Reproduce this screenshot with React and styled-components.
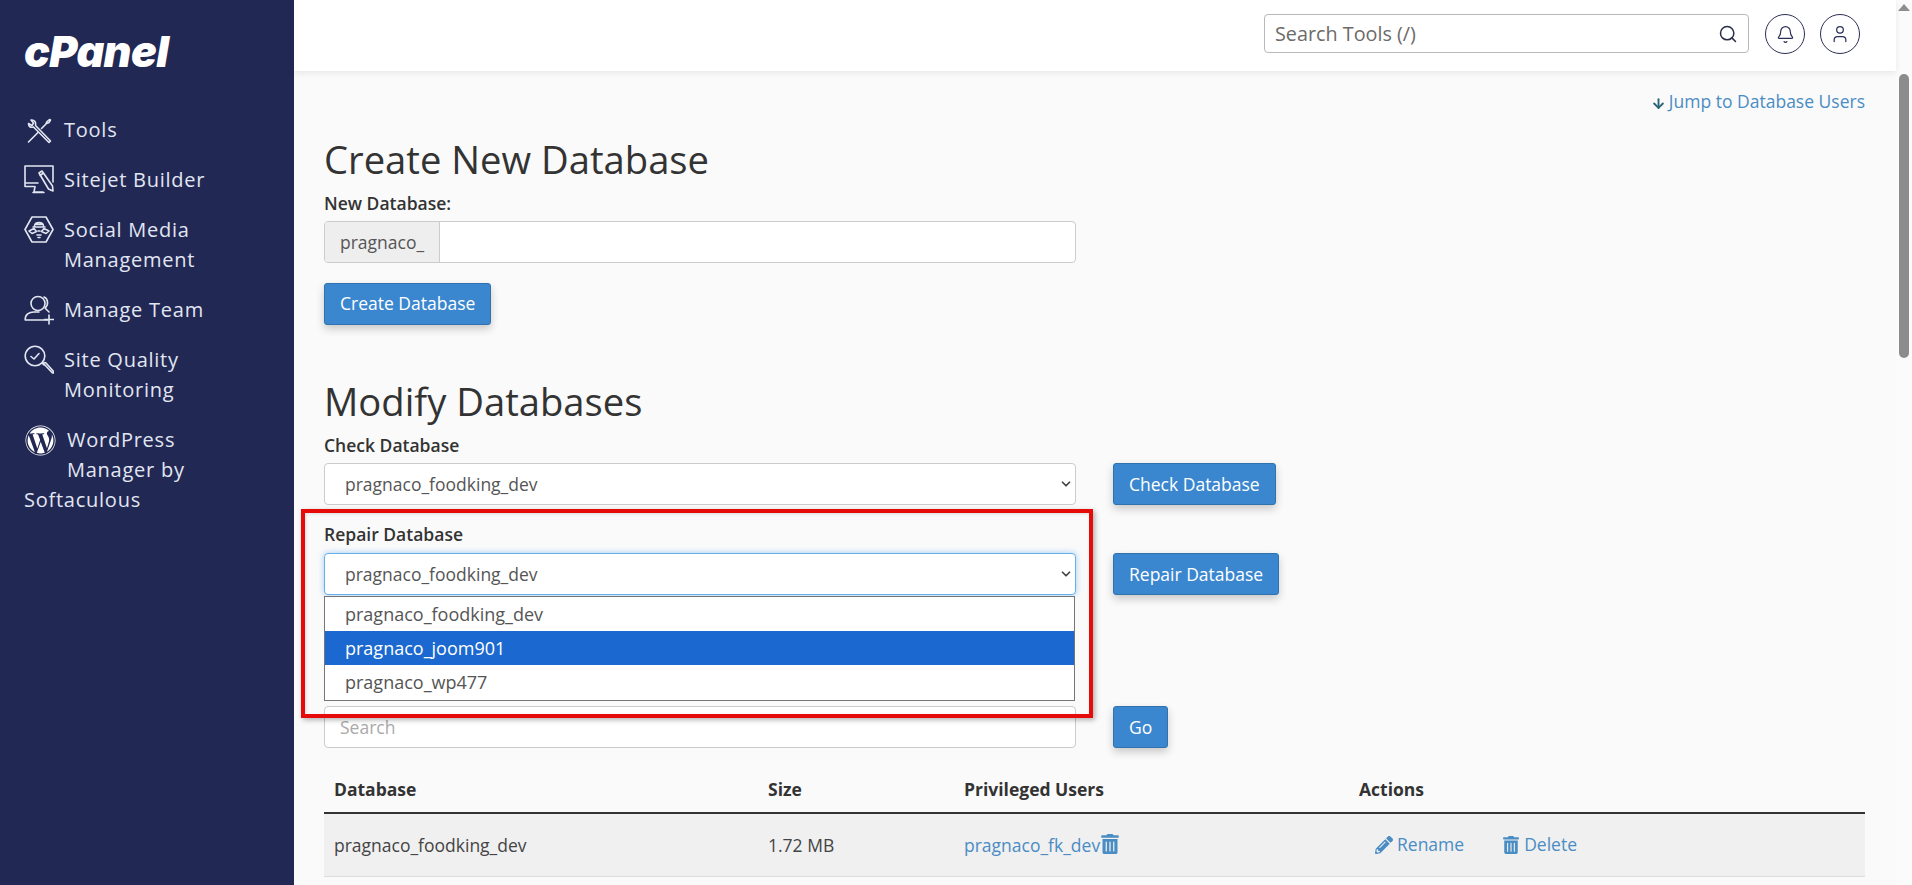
import React from "react";
import styled, { createGlobalStyle } from "styled-components";
import { Search, Bell, User, ArrowDown, ChevronDown } from "lucide-react";
import { FaTrashAlt, FaPencilAlt, FaWordpress } from "react-icons/fa";

const Global = createGlobalStyle`
  html, body { margin: 0; height: 100%; overflow: hidden; }
  body { font-family: "Open Sans", "Liberation Sans", sans-serif; color: #333; background: #fafafa; }
  #root { height: 100%; }
  * { box-sizing: border-box; }
`;

const Page = styled.div`
  display: grid;
  grid-template-columns: 294px 1fr 16px;
  height: 885px;
  overflow: hidden;
`;

const Sidebar = styled.aside`
  background: #212853;
  color: #e2e6f2;
  padding: 36px 40px 0 24px;
`;

const Logo = styled.div`
  font-family: "Inter", "Liberation Sans", sans-serif;
  font-size: 43px;
  line-height: 31px;
  height: 31px;
  font-weight: 900;
  font-style: italic;
  letter-spacing: -0.6px;
  color: #fff;
  margin-bottom: 48px;
  white-space: nowrap;
`;

const Nav = styled.nav`
  display: flex;
  flex-direction: column;
  gap: 20px;
`;

const NavItem = styled.a`
  display: block;
  font-size: 20px;
  line-height: 30px;
  letter-spacing: 0.75px;
  color: inherit;
  min-height: 30px;
  &::after { content: ""; display: block; clear: both; }
`;

const NavIcon = styled.svg`
  float: left;
  width: 30px;
  height: 30px;
  margin-right: 10px;
  margin-bottom: ${(p) => (p.$tall ? "1px" : "0")};
  fill: none;
  stroke: #e2e6f2;
  stroke-width: 1.6;
  stroke-linecap: round;
  stroke-linejoin: round;
`;

const WpIcon = styled(FaWordpress)`
  float: left;
  display: block;
  width: 31px;
  height: 58px;
  margin: 0 11px 0 1px;
  padding-bottom: 27px;
  color: #fff;
`;

const Main = styled.main`
  display: flex;
  flex-direction: column;
  min-width: 0;
`;

const Header = styled.header`
  height: 71px;
  background: #fff;
  box-shadow: 0 2px 6px rgba(0, 0, 0, 0.08);
  display: flex;
  align-items: flex-start;
  justify-content: flex-end;
  gap: 15px;
  padding: 14px 36px 0 0;
  position: relative;
  z-index: 1;
`;

const SearchBox = styled.div`
  width: 485px;
  height: 39px;
  border: 1px solid #b9b9bd;
  border-radius: 4px;
  display: flex;
  align-items: center;
  justify-content: space-between;
  padding: 0 10px;
  margin-right: 1px;
  font-size: 19.8px;
  color: #6d6a68;
  background: #fff;
`;

const RoundButton = styled.button`
  width: 40px;
  height: 40px;
  border-radius: 50%;
  border: 1px solid #2b2f55;
  background: #fff;
  color: #2b2f55;
  display: flex;
  align-items: center;
  justify-content: center;
  padding: 0;
`;

const Content = styled.div`
  position: relative;
  padding: 18px 31px 0 30px;
  font-size: 17.5px;
  line-height: 25px;
`;

const JumpRow = styled.div`
  text-align: right;
  height: 25px;
`;

const Link = styled.a`
  color: #4a8cc4;
  white-space: nowrap;
`;

const JumpArrow = styled(ArrowDown)`
  color: #2a6577;
  vertical-align: -3px;
  margin-right: 3px;
`;

const Title = styled.h2`
  font-size: 38.2px;
  line-height: 41px;
  font-weight: 400;
  color: #333;
  margin: ${(p) => (p.$first ? "25px" : "56px")} 0 11px;
`;

const Label = styled.label`
  display: block;
  font-weight: 600;
  margin-bottom: ${(p) => p.$gap || "5px"};
  color: #333;
`;

const PrefixGroup = styled.div`
  width: 752px;
  height: 42px;
  display: flex;
  border: 1px solid #ccc;
  border-radius: 4px;
  background: #fff;
  overflow: hidden;
`;

const Prefix = styled.span`
  width: 115px;
  background: #eee;
  border-right: 1px solid #ccc;
  color: #555;
  display: flex;
  align-items: center;
  padding-left: 15px;
`;

const Button = styled.button`
  height: 42px;
  padding: 0 15px;
  font: inherit;
  color: #fff;
  background: #3a87cf;
  border: 1px solid #2f72ad;
  border-radius: 3px;
  box-shadow: 0 4px 8px rgba(0, 0, 0, 0.2);
  white-space: nowrap;
`;

const CreateButton = styled(Button)`
  display: block;
  margin-top: 20px;
  padding-bottom: 2px;
`;

const FormRow = styled.div`
  display: grid;
  grid-template-columns: 752px auto;
  justify-content: start;
  column-gap: 37px;
  margin-bottom: ${(p) => p.$gap || "17px"};
`;

const SelectWrap = styled.div`
  position: relative;
  height: 42px;
  width: 752px;
`;

const Select = styled.select`
  appearance: none;
  width: 100%;
  height: 100%;
  font: inherit;
  color: #555;
  background: #fff;
  border: 1px solid ${(p) => (p.$focus ? "#66afe9" : "#ccc")};
  border-radius: 4px;
  padding: 0 0 0 20px;
  outline: none;
  box-shadow: ${(p) => (p.$focus ? "0 0 6px rgba(102, 175, 233, 0.6)" : "none")};
`;

const Chevron = styled(ChevronDown)`
  position: absolute;
  right: 3px;
  top: 14px;
  color: #444;
  pointer-events: none;
`;

const Dropdown = styled.div`
  position: absolute;
  left: 0;
  top: 43px;
  width: 751px;
  height: 105px;
  background: #fff;
  border: 1px solid #767676;
  font-size: 18px;
  z-index: 2;
`;

const Option = styled.div`
  height: ${(p) => p.$h}px;
  display: flex;
  align-items: center;
  padding-left: 20px;
  background: ${(p) => (p.$active ? "#1b68d0" : "transparent")};
  color: ${(p) => (p.$active ? "#fff" : "#555")};
`;

const SearchInput = styled.input`
  width: 752px;
  height: 42px;
  font: inherit;
  background: #fff;
  border: 1px solid #ccc;
  border-radius: 4px;
  padding: 0 15px;
  outline: none;
  &::placeholder { color: #aaa; opacity: 1; }
`;

const RedBox = styled.div`
  position: absolute;
  left: 7px;
  top: 438px;
  width: 792px;
  height: 209px;
  border: 4px solid #e60b0b;
  box-shadow: 2px 2px 5px rgba(0, 0, 0, 0.3), inset 1px 1px 3px rgba(0, 0, 0, 0.12);
  z-index: 3;
  pointer-events: none;
`;

const Table = styled.table`
  width: 100%;
  margin-top: 20px;
  border-collapse: collapse;
  table-layout: fixed;
`;

const Th = styled.th`
  text-align: left;
  font-weight: 700;
  height: 45px;
  padding: 0 10px 10px;
  vertical-align: bottom;
  border-bottom: 2px solid #333;
  width: ${(p) => p.$w || "auto"};
`;

const Td = styled.td`
  height: 63px;
  padding: 2px 10px 0;
  background: #f0f0f0;
  border-bottom: 1px solid #ddd;
  color: #444;
`;

const ActionLink = styled(Link)`
  display: inline-flex;
  align-items: center;
  gap: 4px;
  margin-left: ${(p) => p.$ml || "0"};
`;

const LinkIconWrap = styled.span`
  display: inline-flex;
  color: #4a8cc4;
  font-size: 20px;
  vertical-align: -2px;
`;

const Rail = styled.div`
  background: #fbfbfb;
  display: flex;
  flex-direction: column;
  align-items: center;
  padding-top: 4px;
`;

const RailArrow = styled.div`
  width: 0;
  height: 0;
  border-left: 6px solid transparent;
  border-right: 6px solid transparent;
  border-bottom: 7px solid #8e8e8e;
`;

const Thumb = styled.div`
  width: 10px;
  height: 284px;
  margin-top: 63px;
  border-radius: 5px;
  background: #8c8c8c;
`;

const ToolsIcon = () => (
  <NavIcon viewBox="0 0 30 30">
    <path d="M9.5 12 L25 27.5 L26.5 26 L11.5 10.5 C12.5 7.5 10.5 4.5 7 5 L9.5 8 L8 10.5 L4.5 8.5 C4.5 11.5 6.5 13 9.5 12 Z" />
    <path d="M4.5 27 L14 17.5 M17.5 13.5 L22.5 8.5 L25 7.5 L26.5 5 L25.5 4.5 L23 6.5 L22 8.5" />
  </NavIcon>
);
const SitejetIcon = () => (
  <NavIcon viewBox="0 0 30 30">
    <path d="M10 21.5 H1 V1 H29 V17 M1 18 H14" />
    <path d="M11 21.5 L10 27 H19 M9 27.5 H20" />
    <path d="M15 8 L18 6 L28.5 21 L29 26 L24.5 24 Z M16 10.5 L19.5 8" />
  </NavIcon>
);
const SocialIcon = () => (
  <NavIcon viewBox="0 0 30 30" $tall>
    <path d="M1 14.5 L8 2 H22 L29 14.5 L22 27 H8 Z" />
    <path d="M10.5 11 C11 6.5 19 6.5 19.5 11 M9 12 H21 M12.5 9.5 H17.5" />
    <path d="M5 16 L10 13.5 L12.5 16.5 L8 18.5 Z M25 16 L20 13.5 L17.5 16.5 L22 18.5 Z M13 20 H17 M14 16 H16 M14 22.5 H16" />
  </NavIcon>
);
const TeamIcon = () => (
  <NavIcon viewBox="0 0 30 30">
    <circle cx="14" cy="8.5" r="7" />
    <path d="M20 2 C24 3.5 25 10 21 13 L25 17" />
    <path d="M24 25 H1.2 C1 19.5 5 17 10 17 H15" />
    <path d="M25 20 V29 M20.5 24.5 H29.5" />
  </NavIcon>
);
const QualityIcon = () => (
  <NavIcon viewBox="0 0 30 30" $tall>
    <circle cx="11" cy="11" r="9.8" />
    <path d="M7 11.5 L10 14 L15 8.5" />
    <path d="M18 18 L20 20 M20 19 L27.5 27 C29.5 29.5 30 27 29.5 26.5 L22 18 C20.5 17 19 18 20 19 Z" />
  </NavIcon>
);

export default function App() {
  return (
    <Page>
      <Global />
      <Sidebar>
        <Logo>cPanel</Logo>
        <Nav>
          <NavItem><ToolsIcon />Tools</NavItem>
          <NavItem><SitejetIcon />Sitejet Builder</NavItem>
          <NavItem><SocialIcon />Social Media Management</NavItem>
          <NavItem><TeamIcon />Manage Team</NavItem>
          <NavItem><QualityIcon />Site Quality Monitoring</NavItem>
          <NavItem><WpIcon />WordPress Manager by Softaculous</NavItem>
        </Nav>
      </Sidebar>
      <Main>
        <Header>
          <SearchBox>
            Search Tools (/)
            <Search size={20} color="#2a2f45" strokeWidth={1.8} />
          </SearchBox>
          <RoundButton aria-label="Notifications"><Bell size={19} strokeWidth={1.5} /></RoundButton>
          <RoundButton aria-label="Account"><User size={20} strokeWidth={1.5} /></RoundButton>
        </Header>
        <Content>
          <JumpRow>
            <Link><JumpArrow size={15} strokeWidth={3} />Jump to Database Users</Link>
          </JumpRow>
          <Title $first>Create New Database</Title>
          <Label>New Database:</Label>
          <PrefixGroup>
            <Prefix>pragnaco_</Prefix>
          </PrefixGroup>
          <CreateButton>Create Database</CreateButton>

          <Title>Modify Databases</Title>
          <Label>Check Database</Label>
          <FormRow>
            <SelectWrap>
              <Select><option>pragnaco_foodking_dev</option></Select>
              <Chevron size={14} strokeWidth={3} />
            </SelectWrap>
            <Button>Check Database</Button>
          </FormRow>
          <Label $gap="6px">Repair Database</Label>
          <FormRow $gap="111px">
            <SelectWrap>
              <Select $focus><option>pragnaco_foodking_dev</option></Select>
              <Chevron size={14} strokeWidth={3} />
              <Dropdown>
                <Option $h={34}>pragnaco_foodking_dev</Option>
                <Option $h={34} $active>pragnaco_joom901</Option>
                <Option $h={35}>pragnaco_wp477</Option>
              </Dropdown>
            </SelectWrap>
            <Button>Repair Database</Button>
          </FormRow>
          <FormRow $gap="0">
            <SearchInput placeholder="Search" />
            <Button>Go</Button>
          </FormRow>
          <RedBox />
          <Table>
            <thead>
              <tr>
                <Th $w="434px">Database</Th>
                <Th $w="196px">Size</Th>
                <Th $w="395px">Privileged Users</Th>
                <Th>Actions</Th>
              </tr>
            </thead>
            <tbody>
              <tr>
                <Td>pragnaco_foodking_dev</Td>
                <Td>1.72 MB</Td>
                <Td>
                  <Link>pragnaco_fk_dev</Link>
                  <LinkIconWrap><FaTrashAlt /></LinkIconWrap>
                </Td>
                <Td>
                  <ActionLink $ml="16px"><FaPencilAlt size={18} />Rename</ActionLink>
                  <ActionLink $ml="38px"><FaTrashAlt size={18} />Delete</ActionLink>
                </Td>
              </tr>
            </tbody>
          </Table>
        </Content>
      </Main>
      <Rail>
        <RailArrow />
        <Thumb />
      </Rail>
    </Page>
  );
}
